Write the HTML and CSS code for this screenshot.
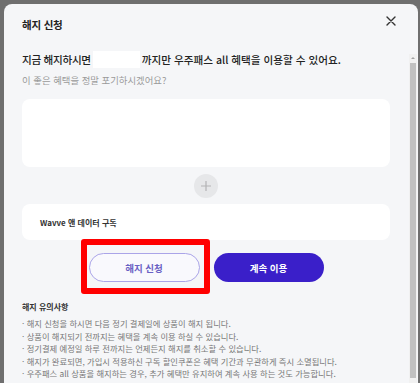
FILE: index.html
```html
<!DOCTYPE html>
<html lang="ko">
<head>
<meta charset="utf-8">
<title>해지 신청</title>
<link rel="stylesheet" href="styles.css">
</head>
<body>
<div class="modal">
  <div class="main">
    <div class="header">
      <h1 class="title">해지 신청</h1>
      <button class="close" aria-label="닫기">
        <svg width="10" height="10" viewBox="0 0 10 10"><path d="M1 1L9 9M9 1L1 9" stroke="#333" stroke-width="1.4" stroke-linecap="round"/></svg>
      </button>
    </div>
    <div class="content">
      <p class="lead"><span class="lead-a">지금 해지하시면</span><span class="redact"></span>까지만 우주패스 all 혜택을 이용할 수 있어요.</p>
      <p class="sub">이 좋은 혜택을 정말 포기하시겠어요?</p>
      <div class="card card-empty"></div>
      <div class="plus-wrap">
        <div class="plus">
          <svg width="12" height="12" viewBox="0 0 12 12"><path d="M6 1V11M1 6H11" stroke="#b3b3b5" stroke-width="1.2"/></svg>
        </div>
      </div>
      <div class="card card-item">Wavve 앤 데이터 구독</div>
      <div class="actions">
        <div class="highlight-wrap">
          <button class="btn btn-outline">해지 신청</button>
          <span class="highlight"></span>
        </div>
        <button class="btn btn-primary">계속 이용</button>
      </div>
      <div class="notice">
        <h2 class="notice-title">해지 유의사항</h2>
        <ul class="notice-list">
          <li>· 해지 신청을 하시면 다음 정기 결제일에 상품이 해지 됩니다.</li>
          <li>· 상품이 해지되기 전까지는 혜택을 계속 이용 하실 수 있습니다.</li>
          <li>· 정기결제 예정일 하루 전까지는 언제든지 해지를 취소할 수 있습니다.</li>
          <li>· 해지가 완료되면, 가입시 적용하신 구독 할인쿠폰은 혜택 기간과 무관하게 즉시 소멸됩니다.</li>
          <li>· 우주패스 all 상품을 해지하는 경우, 추가 혜택만 유지하여 계속 사용 하는 것도 가능합니다.</li>
        </ul>
      </div>
    </div>
  </div>
  <div class="scrollbar">
    <div class="sb-arrow"></div>
    <div class="sb-thumb"></div>
  </div>
</div>
</body>
</html>
```
FILE: styles.css
```css
html, body {
  margin: 0;
  padding: 0;
}
body {
  background: #6f6f6f;
  height: 383px;
  overflow: hidden;
  font-family: "Noto Sans CJK KR", "Noto Sans", sans-serif;
  padding: 4px 2px 0 4px;
  box-sizing: border-box;
}
.modal {
  background: #f5f6f8;
  border-radius: 8px 8px 0 0;
  height: 379px;
  overflow: hidden;
  display: flex;
}
.main {
  flex: 1;
  min-width: 0;
}
.header {
  height: 47px;
  display: flex;
  justify-content: space-between;
  align-items: flex-start;
  padding: 0 0 0 18px;
  box-sizing: border-box;
}
.title {
  margin: 14px 0 0;
  font-size: 10.5px;
  line-height: 14px;
  font-weight: 700;
  color: #222;
  letter-spacing: -0.2px;
}
.close {
  border: 0;
  background: none;
  padding: 0;
  margin: 12px 13px 0 0;
  width: 10px;
  height: 10px;
  display: flex;
}
.content {
  padding: 0 19px 0 18px;
}
.lead {
  margin: 0;
  font-size: 10.6px;
  line-height: 17px;
  color: #222;
  font-weight: 500;
  white-space: nowrap;
}
.lead-a {
  letter-spacing: -0.3px;
}
.redact {
  display: inline-block;
  width: 47px;
  height: 17px;
  background: #fff;
  vertical-align: top;
  margin: 0 2px 0 2px;
}
.sub {
  margin: 6px 0 0;
  font-size: 9.4px;
  line-height: 12px;
  color: #9a9a9a;
}
.card {
  background: #fff;
  border-radius: 8px;
}
.card-empty {
  margin-top: 13px;
  height: 68px;
}
.plus-wrap {
  display: flex;
  justify-content: center;
  padding: 7px 0 6px;
}
.plus {
  width: 24px;
  height: 24px;
  border-radius: 50%;
  background: #e6e7e9;
  display: flex;
  align-items: center;
  justify-content: center;
}
.card-item {
  height: 36px;
  display: flex;
  align-items: center;
  padding-left: 18px;
  font-size: 8px;
  font-weight: 700;
  color: #333;
}
.actions {
  display: flex;
  justify-content: center;
  gap: 14px;
  margin-top: 13px;
}
.highlight-wrap {
  position: relative;
  display: flex;
}
.highlight {
  position: absolute;
  left: -8px;
  right: -10px;
  top: -14px;
  bottom: -12px;
  border: 6px solid #ff0000;
  border-radius: 3px;
  pointer-events: none;
}
.btn {
  width: 111px;
  height: 29px;
  border-radius: 15px;
  font-family: inherit;
  font-size: 9.5px;
  font-weight: 700;
  padding: 0;
  box-sizing: border-box;
}
.btn-outline {
  background: #f9f9fd;
  border: 1px solid #aaa4e8;
  color: #6a61c4;
}
.btn-primary {
  width: 110px;
  background: #3a1fc9;
  border: 0;
  color: #fff;
}
.notice {
  margin-top: 19px;
}
.notice-title {
  margin: 0;
  font-size: 8px;
  line-height: 12px;
  font-weight: 700;
  color: #333;
}
.notice-list {
  list-style: none;
  margin: 4px 0 0;
  padding: 0;
}
.notice-list li {
  font-size: 8.3px;
  line-height: 12.5px;
  color: #777;
  white-space: nowrap;
}
.scrollbar {
  width: 8px;
  margin: 50px 1px 0 0;
  background: #f1f1f1;
  display: flex;
  flex-direction: column;
}
.sb-arrow {
  height: 9px;
  position: relative;
}
.sb-arrow::after {
  content: "";
  position: absolute;
  left: 2px;
  top: 3px;
  border-left: 2px solid transparent;
  border-right: 2px solid transparent;
  border-bottom: 2px solid #a3a3a3;
}
.sb-thumb {
  height: 315px;
  background: #c1c1c1;
  margin: 0 1px;
}
```
